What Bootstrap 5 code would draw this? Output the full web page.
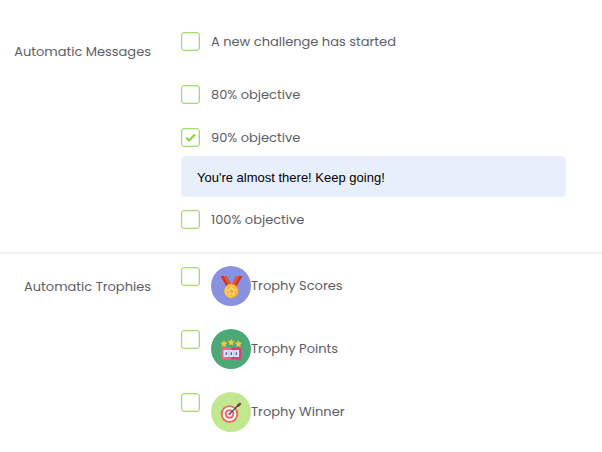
<!DOCTYPE html>
<html lang="en">
<head>
<meta charset="utf-8">
<meta name="viewport" content="width=device-width, initial-scale=1">
<title>Challenge settings</title>
<link href="https://cdn.jsdelivr.net/npm/bootstrap@5.3.0/dist/css/bootstrap.min.css" rel="stylesheet">
<style>
body { font-family: Poppins, Inter, sans-serif; font-size: 13px; line-height: 21px; color: #5b5d66; background: #fff; }
.side-label { flex: 0 0 151px; margin-right: 30px; padding-top: 10px; text-align: right; }
.fields { padding-right: 36px; min-width: 0; }
.messages { padding: 31px 0 22px; border-bottom: 2px solid #f0f0f1; }
.trophies { padding: 12px 0 20px; }
.trophies .fields { display: grid; gap: 23px; }
.option { display: flex; align-items: center; gap: 11px; }
.option-first { margin-bottom: 32px; }
.option-mid { margin-bottom: 22px; }
.form-check-input.tick { flex: none; width: 19px; height: 19px; margin: 0; border: 1px solid #a5dc6c; border-radius: 3px; background-color: #fff; box-shadow: inset 0 0 0 1px #e3f4d2; }
.form-check-input.tick:checked { background-color: #fff; border-color: #a5dc6c; background-size: 17px 17px; background-image: url("data:image/svg+xml,%3Csvg xmlns='http://www.w3.org/2000/svg' viewBox='0 0 17 17'%3E%3Cpath d='M4.300 8.700 7.100 11.500 13 5.400' fill='none' stroke='%238ed145' stroke-width='2.200'/%3E%3C/svg%3E"); }
.message-text.form-control { margin: 8px 0 12px; padding: 10px 15px 8px; border: 1px solid #f0f1f5; border-radius: 4px; background: #e8effc; color: #000; font-family: "Liberation Sans", Arial, sans-serif; font-size: 13px; line-height: 21px; }
.trophy-option { display: flex; align-items: flex-start; gap: 11px; }
.trophy-option .form-check-input.tick { margin-top: 1px; }
.trophy-label { display: flex; align-items: center; line-height: 20px; }
.trophy-icon { flex: none; width: 40px; height: 40px; }
</style>
<script src="https://cdn.jsdelivr.net/npm/bootstrap@5.3.0/dist/js/bootstrap.bundle.min.js" defer></script>
</head>
<body>
<form>
  <section class="messages d-flex" aria-labelledby="messages-title">
    <div class="side-label" id="messages-title">Automatic Messages</div>
    <div class="fields flex-grow-1">
      <div class="option option-first">
        <input class="form-check-input tick" type="checkbox" id="started">
        <label for="started">A new challenge has started</label>
      </div>
      <div class="option option-mid">
        <input class="form-check-input tick" type="checkbox" id="obj80">
        <label for="obj80">80% objective</label>
      </div>
      <div class="option">
        <input class="form-check-input tick" type="checkbox" id="obj90" checked>
        <label for="obj90">90% objective</label>
      </div>
      <input class="form-control message-text" type="text" aria-label="Message at 90% objective" value="You're almost there! Keep going!">
      <div class="option">
        <input class="form-check-input tick" type="checkbox" id="obj100">
        <label for="obj100">100% objective</label>
      </div>
    </div>
  </section>

  <section class="trophies d-flex" aria-labelledby="trophies-title">
    <div class="side-label" id="trophies-title">Automatic Trophies</div>
    <div class="fields flex-grow-1">
      <div class="trophy-option">
        <input class="form-check-input tick" type="checkbox" id="scores">
        <label class="trophy-label" for="scores">
          <svg class="trophy-icon" viewBox="0 0 40 40" aria-hidden="true">
            <circle cx="20" cy="20" r="20" fill="#8992e1"/>
            <path d="M9.500 10h6l5.500 10-4 3z" fill="#d13326"/>
            <path d="M12.500 10h3l5 10-2.500 1.500z" fill="#f0522f"/>
            <path d="M31.500 10h-6L20 20l4 3z" fill="#d13326"/>
            <path d="M28.500 10h-3L20 20l2.500 1.500z" fill="#f0522f"/>
            <circle cx="20.500" cy="25" r="7.200" fill="#f6a62c"/>
            <path d="M20.500 17.800a7.200 7.200 0 0 0 0 14.400z" fill="#fbc044"/>
            <circle cx="20.500" cy="25" r="5.400" fill="#f8b437" stroke="#ffd35b" stroke-width=".8"/>
            <path d="m20.500 21 1.200 2.600 2.800.3-2.100 1.900.6 2.800-2.500-1.400-2.500 1.400.6-2.800-2.100-1.900 2.800-.3z" fill="#f6a62c" stroke="#fff0a1" stroke-width=".9"/>
          </svg>
          <span>Trophy Scores</span>
        </label>
      </div>
      <div class="trophy-option">
        <input class="form-check-input tick" type="checkbox" id="points">
        <label class="trophy-label" for="points">
          <svg class="trophy-icon" viewBox="0 0 40 40" aria-hidden="true">
            <defs><path id="star" d="m0-3.300 1 2.100 2.300.3L1.600.7 2 3 0 1.900-2 3l.4-2.300-1.700-1.600 2.300-.3z"/></defs>
            <circle cx="20" cy="20" r="20" fill="#4ba978"/>
            <g fill="#fdc73d" stroke="#f9b63a" stroke-width=".4">
              <use href="#star" x="13" y="14.800"/>
              <use href="#star" x="20.200" y="13.300"/>
              <use href="#star" x="27.400" y="14.800"/>
            </g>
            <rect x="10.300" y="18.500" width="20" height="12" rx="1.200" fill="#f5648b"/>
            <path d="M20.300 18.500h8.800a1.200 1.200 0 0 1 1.200 1.200v9.600a1.200 1.200 0 0 1-1.200 1.200h-8.800z" fill="#dc3d79"/>
            <rect x="12.500" y="21" width="15.600" height="7" fill="#dfe0fb"/>
            <path d="M17.300 21h1v7h-1zm5 0h1v7h-1z" fill="#c1c1f1"/>
            <path d="M15.300 23.200v2.800m5-2.800v2.800m5-2.800v2.800" fill="none" stroke="#4c4d8c" stroke-width="1.200"/>
          </svg>
          <span>Trophy Points</span>
        </label>
      </div>
      <div class="trophy-option">
        <input class="form-check-input tick" type="checkbox" id="winner">
        <label class="trophy-label" for="winner">
          <svg class="trophy-icon" viewBox="0 0 40 40" aria-hidden="true">
            <circle cx="20" cy="20" r="20" fill="#c1e88e"/>
            <circle cx="18.500" cy="22" r="8.800" fill="#ee6463"/>
            <circle cx="18.500" cy="22" r="6.900" fill="#fff"/>
            <circle cx="18.500" cy="22" r="4.800" fill="#ee6463"/>
            <circle cx="18.500" cy="22" r="2.800" fill="#fff"/>
            <circle cx="18.500" cy="22" r="1.200" fill="#ee6463"/>
            <path d="m18.500 22 8.500-8.500" stroke="#3e4654" stroke-width="1.100"/>
            <path d="m25.500 15 .4-2.200 3.300-2.600.2 1.400 1.300.2-2.700 2.900z" fill="#9f3843"/>
            <path d="m25.500 15 4-4" stroke="#4b3440" stroke-width=".7"/>
          </svg>
          <span>Trophy Winner</span>
        </label>
      </div>
    </div>
  </section>
</form>
</body>
</html>
